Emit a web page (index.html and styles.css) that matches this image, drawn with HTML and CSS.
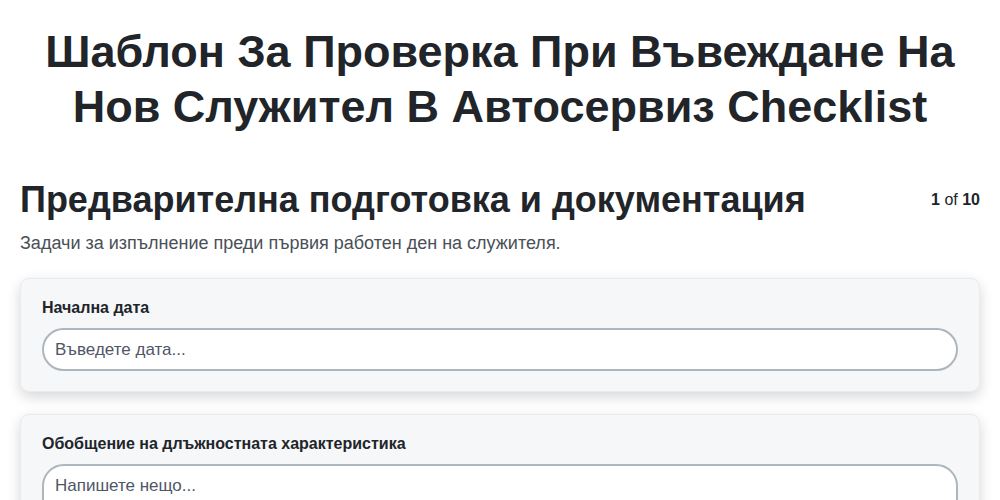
FILE: index.html
```html
<!DOCTYPE html>
<html lang="bg">
  <head>
    <meta charset="UTF-8" />
    <meta name="viewport" content="width=device-width, initial-scale=1.0" />
    <title>Checklist</title>
    <link rel="stylesheet" href="styles.css">
  </head>
  <body>
    <div class="page">
      <h1 class="main-title">Шаблон За Проверка При Въвеждане На Нов Служител В Автосервиз Checklist</h1>

      <div class="section-head">
        <h2 class="section-title">Предварителна подготовка и документация</h2>
        <div class="step-count"><b>1</b> of <b>10</b></div>
      </div>
      <p class="section-desc">Задачи за изпълнение преди първия работен ден на служителя.</p>

      <div class="field-card">
        <label class="field-label">Начална дата</label>
        <input type="text" class="field-input" placeholder="Въведете дата..." />
      </div>

      <div class="field-card">
        <label class="field-label">Обобщение на длъжностната характеристика</label>
        <textarea class="field-input field-area" placeholder="Напишете нещо..."></textarea>
      </div>
    </div>
  </body>
</html>
```

FILE: styles.css
```css
* {
  margin: 0;
  padding: 0;
  box-sizing: border-box;
  font-family: "Liberation Sans", Arial, sans-serif;
}
body {
  background-color: #fff;
  color: #212529;
}
.page {
  max-width: 1000px;
  margin: 0 auto;
  padding: 24px 20px 40px;
}
.main-title {
  text-align: center;
  font-size: 45px;
  line-height: 55px;
  font-weight: bold;
  color: #212529;
}
.section-head {
  display: flex;
  justify-content: space-between;
  align-items: flex-start;
  margin-top: 44px;
}
.section-title {
  font-size: 36px;
  line-height: 44px;
  font-weight: bold;
}
.step-count {
  font-size: 16px;
  color: #212529;
  padding-top: 13px;
}
.section-desc {
  margin-top: 11px;
  font-size: 18px;
  color: #495057;
}
.field-card {
  display: flex;
  flex-direction: column;
  margin-top: 24px;
  padding: 20px 21px;
  background-color: #f6f7f9;
  border: 1px solid #e9ebef;
  border-radius: 9px;
  box-shadow: 0 5px 14px rgba(0, 0, 0, 0.16);
}
.field-card + .field-card {
  margin-top: 22px;
}
.field-label {
  font-size: 16px;
  font-weight: bold;
  color: #212529;
  margin-bottom: 11px;
}
.field-input {
  width: 100%;
  height: 43px;
  padding: 0 11px;
  font-size: 17px;
  color: #333;
  background-color: #fff;
  border: 2px solid #adb5bd;
  border-radius: 22px;
  outline: none;
}
.field-input::placeholder {
  color: #4f5666;
}
.field-area {
  height: 80px;
  padding-top: 10px;
  resize: none;
}
```
